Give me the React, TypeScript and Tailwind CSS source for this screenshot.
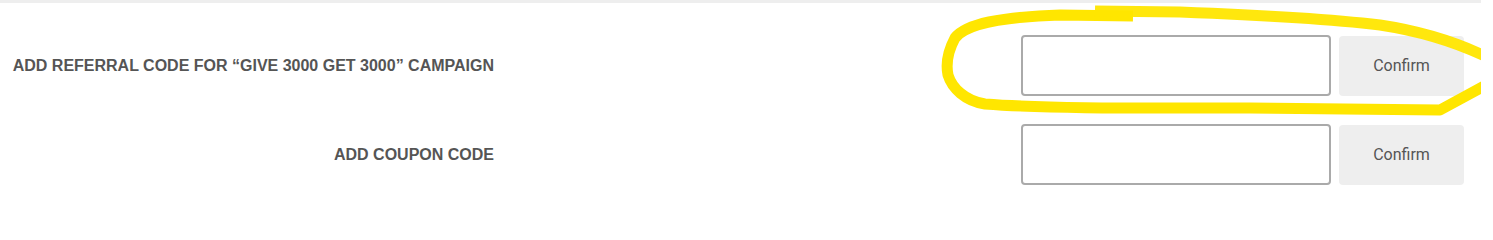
import React from "react";

const rows = [
  { id: "referral", label: "ADD REFERRAL CODE FOR “GIVE 3000 GET 3000” CAMPAIGN" },
  { id: "coupon", label: "ADD COUPON CODE" },
];

function CodeRow({ label }: { label: string }) {
  return (
    <div className="flex items-center">
      <div className="w-[494px] shrink-0 text-right text-[16px] font-bold leading-5 text-[#555] [font-family:'Liberation_Sans',Arial,sans-serif]">
        {label}
      </div>
      <div className="ml-[527px] flex items-center gap-2">
        <input
          type="text"
          className="h-[61px] w-[310px] rounded-[4px] border-2 border-[#aaa] bg-white px-3 text-[16px] outline-none"
        />
        <button
          type="button"
          className="h-[60px] w-[125px] rounded-[4px] bg-[#eee] text-[16px] text-[#555] [font-family:Roboto,sans-serif]"
        >
          Confirm
        </button>
      </div>
    </div>
  );
}

// hand-drawn highlight around the referral input
function Highlight() {
  return (
    <svg
      className="pointer-events-none absolute left-0 top-0"
      width="1481"
      height="201"
      viewBox="0 0 1481 201"
      fill="none"
    >
      <path
        d="M1133 13 L1060 12 C1000 14 966 21 955 35 C948 48 946 62 948 72 C952 85 965 98 985 101 C1050 106 1150 105 1250 105 L1440 107 L1490 80"
        stroke="#ffe600"
        strokeWidth="11"
        strokeLinejoin="round"
      />
      <path
        d="M1095 8 L1180 9 C1260 12 1330 16 1380 22 C1420 28 1460 40 1495 58"
        stroke="#ffe600"
        strokeWidth="11"
        strokeLinejoin="round"
        opacity="0.95"
      />
    </svg>
  );
}

export default function App() {
  return (
    <div className="h-[201px] w-full bg-white">
      <div className="relative h-full w-[1481px] overflow-hidden border-t-[3px] border-[#eee]">
        <div className="flex flex-col gap-7 pt-8">
          {rows.map((r) => (
            <CodeRow key={r.id} label={r.label} />
          ))}
        </div>
        <Highlight />
      </div>
    </div>
  );
}
